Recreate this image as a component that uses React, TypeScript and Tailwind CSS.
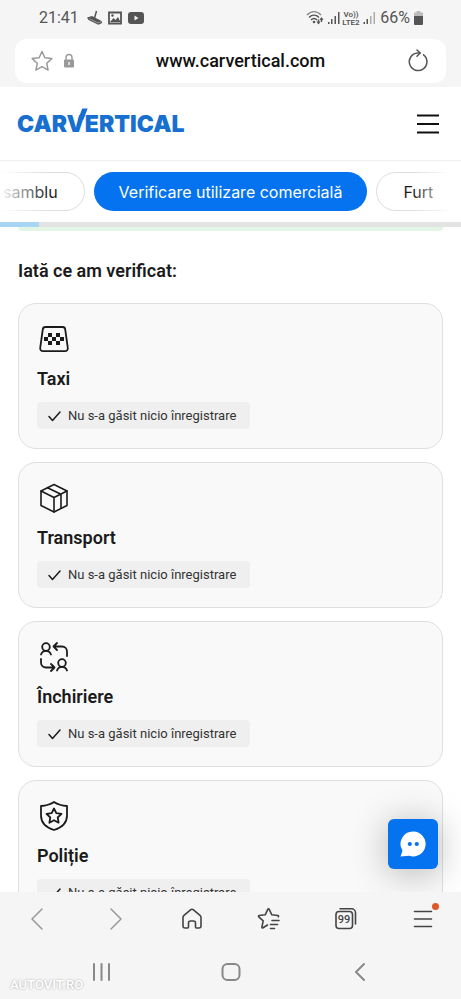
import React from 'react';

type IconProps = { className?: string };

const Stroke: React.FC<{ className?: string; box: string; width?: number; children: React.ReactNode }> = ({
  className,
  box,
  width = 1.6,
  children,
}) => (
  <svg
    className={className}
    viewBox={box}
    fill="none"
    stroke="currentColor"
    strokeWidth={width}
    strokeLinecap="round"
    strokeLinejoin="round"
    aria-hidden="true"
  >
    {children}
  </svg>
);

const TaxiIcon: React.FC<IconProps> = ({ className }) => (
  <Stroke className={className} box="0 0 34 34" width={1.8}>
    <path d="M8.400 5h17.200a2.600 2.600 0 0 1 2.600 2.300l2.600 18.600a2.800 2.800 0 0 1-2.800 3.300H6a2.800 2.800 0 0 1-2.800-3.300l2.600-18.600A2.600 2.600 0 0 1 8.400 5Z" />
    <g fill="currentColor" stroke="none">
      <path d="M11 11h4v4h-4zM19 11h4v4h-4zM7 15h4v4H7zM15 15h4v4h-4zM23 15h4v4h-4zM11 19h4v4h-4zM19 19h4v4h-4z" />
    </g>
  </Stroke>
);

const BoxIcon: React.FC<IconProps> = ({ className }) => (
  <Stroke className={className} box="0 0 34 34">
    <path d="M17 3.500 30 10v14.500L17 31 4 24.500V10Z" />
    <path d="M4 10l13 6.500L30 10M17 16.500V31M10.500 6.700l13.500 6.600v14" />
  </Stroke>
);

const RentIcon: React.FC<IconProps> = ({ className }) => (
  <Stroke className={className} box="0 0 34 34" width={1.8}>
    <circle cx="9" cy="7" r="3.800" />
    <path d="M4 14.500c.8-2.400 2.600-3.700 5-3.700s4.200 1.300 5 3.700" />
    <circle cx="25" cy="23" r="3.800" />
    <path d="M20 30.500c.8-2.400 2.600-3.700 5-3.700s4.200 1.300 5 3.700" />
    <path d="M20 3 16.500 6.500 20 10M16.500 6.500H25a5 5 0 0 1 5 5V16" />
    <path d="M14 24l3.500 3.500L14 31M17.500 27.500H9a5 5 0 0 1-5-5V19" />
  </Stroke>
);

const ShieldIcon: React.FC<IconProps> = ({ className }) => (
  <Stroke className={className} box="0 0 34 34" width={1.8}>
    <path d="M17 3c4 2.600 8 3.700 13 4v9.500c0 7-5 12-13 14.500C9 28.500 4 23.500 4 16.500V7c5-.3 9-1.400 13-4Z" />
    <path d="m17 9.500 2.300 4.700 5.200.7-3.800 3.600.9 5.200-4.600-2.500-4.600 2.500.9-5.200-3.800-3.600 5.200-.7Z" />
  </Stroke>
);

const checks = [
  { title: 'Taxi', Icon: TaxiIcon },
  { title: 'Transport', Icon: BoxIcon },
  { title: 'Închiriere', Icon: RentIcon },
  { title: 'Poliție', Icon: ShieldIcon },
];

const StatusBar: React.FC = () => (
  <div className="flex h-9 items-center justify-between pl-[39px] pr-[38px] text-[#555]">
    <div className="flex items-center gap-1">
      <span className="mr-1 text-base">21:41</span>
      <svg className="h-4 w-4" viewBox="0 0 16 16" fill="currentColor" aria-hidden="true">
        <path d="M0 7.500 5 6l9.500 5c.8.500.8 2-.2 2.500l-3 1.200L1.500 10Z" />
        <path d="M7.500 8 9.500 1" stroke="currentColor" strokeWidth="1.500" />
        <path d="m2.500 8.800 8.500 4.200 3.500-1.400" stroke="#bbb" strokeWidth=".7" fill="none" />
      </svg>
      <svg className="h-4 w-4" viewBox="0 0 16 16" aria-hidden="true">
        <path d="M2 2.500h12v11H2Z" fill="none" stroke="currentColor" strokeWidth="1.800" />
        <path d="m3 12 3.500-4 2 2L11 7l2.500 5Z" fill="currentColor" />
        <circle cx="5.500" cy="5.500" r="1.200" fill="currentColor" />
      </svg>
      <svg className="h-4 w-[18px]" viewBox="0 0 18 16" aria-hidden="true">
        <rect x="1" y="2" width="16" height="12" rx="3" fill="currentColor" />
        <path d="m7.500 5.500 4 2.500-4 2.500Z" fill="#f5f5f5" />
      </svg>
    </div>
    <div className="flex items-center gap-1">
      <svg className="h-4 w-[70px]" viewBox="0 0 70 16" aria-hidden="true">
        <g fill="none" stroke="currentColor" strokeWidth="1.400">
          <path d="M1 5c4-4.500 10-4.500 14 0" stroke="#888" />
          <path d="M3 7.500c3-3 7-3 10 0M5 10c2-2 4-2 6 0" />
          <path d="M12.500 9.500v4M15.500 8v4" />
        </g>
        <g fill="currentColor">
          <circle cx="8" cy="12" r="1.300" />
          <path d="m10.500 11.500 2 3 2-3ZM13.500 10l2-3 2 3Z" />
          <path d="M22 12h1.500v2H22ZM25 9h1.500v5H25ZM28.500 6H30v8h-1.500ZM32 2h1.500v12H32Z" />
          <path d="M57.500 12H59v2h-1.500ZM60.500 9H62v5h-1.500Z" />
          <path d="M64 6h1.500v8H64ZM67.500 2H69v12h-1.500Z" opacity=".45" />
        </g>
        <text x="45" y="7" fontSize="8" fontWeight="600" fill="currentColor" textAnchor="middle">Vo))</text>
        <text x="45" y="15" fontSize="8" fontWeight="600" fill="currentColor" textAnchor="middle">LTE2</text>
      </svg>
      <span className="text-base">66%</span>
      <svg className="h-[14px] w-[9px]" viewBox="0 0 9 14" aria-hidden="true">
        <path d="M2.500 0h4v1.500H9V6H0V1.500h2.500Z" fill="#bbb" />
        <path d="M0 5h9v8a1 1 0 0 1-1 1H1a1 1 0 0 1-1-1Z" fill="currentColor" />
      </svg>
    </div>
  </div>
);

const AddressBar: React.FC = () => (
  <div className="mx-[15px] mt-[3px] flex h-11 items-center rounded-xl bg-white px-4">
    <button aria-label="Favorite" className="text-[#999]">
      <Stroke className="h-[22px] w-[22px]" box="0 0 22 22" width={1.5}>
        <path d="m11 1.500 2.900 6.300 6.900.8-5.100 4.700 1.400 6.800L11 16.700l-6.100 3.400 1.400-6.800L1.200 8.600l6.900-.8Z" />
      </Stroke>
    </button>
    <svg className="ml-2.5 h-4 w-3 text-[#999]" viewBox="0 0 12 16" aria-hidden="true">
      <path d="M3 7V4.500a3 3 0 0 1 6 0V7" fill="none" stroke="currentColor" strokeWidth="1.400" />
      <rect x="1" y="6.500" width="10" height="8" rx="1" fill="currentColor" />
      <path d="M6 9v3" stroke="#fff" strokeWidth="1.300" />
    </svg>
    <input
      aria-label="Adresă"
      defaultValue="www.carvertical.com"
      className="min-w-0 flex-1 bg-transparent text-center text-lg font-medium text-[#111] outline-none"
    />
    <button aria-label="Reîncarcă" className="text-[#555]">
      <Stroke className="h-6 w-6" box="0 0 24 24" width={1.5}>
        <path d="M17.500 5.800A8.800 8.800 0 1 1 11.500 4H14" />
        <path d="m11 1 3.200 3-3.200 3.200" />
      </Stroke>
    </button>
  </div>
);

const SiteHeader: React.FC = () => (
  <header className="flex h-[74px] shrink-0 items-center justify-between border-b border-[#eee] pl-[17px] pr-[22px]">
    <a href="#" className="font-[Inter,sans-serif] text-[23px] font-black leading-7 text-[#176fd0]">
      CAR
      <span className="relative">
        V
        {/* raised right arm of the V */}
        <svg className="absolute -top-0.5 left-0 h-3 w-[22px]" viewBox="0 0 22 12" fill="currentColor" aria-hidden="true">
          <path d="M15.200.6h5.400L16.500 11.600H11Z" />
        </svg>
      </span>
      ERTICAL
    </a>
    <button aria-label="Meniu" className="text-[#111]">
      <svg className="h-6 w-[22px]" viewBox="0 0 22 24" aria-hidden="true">
        <path d="M0 3.500h22M0 12h22M0 20.500h22" stroke="currentColor" strokeWidth="2" />
      </svg>
    </button>
  </header>
);

const Tabs: React.FC = () => (
  <nav className="relative shrink-0 font-[Inter,sans-serif] text-base text-[#1c1c1c]">
    <div className="flex h-[61px] items-center justify-center gap-[9px] overflow-hidden">
      <button className="flex h-[39px] w-28 shrink-0 items-center justify-end rounded-full border border-[#ddd] px-[26px]">
        samblu
      </button>
      <button className="h-[39px] shrink-0 rounded-full bg-[#0573f0] px-[25px] text-white">
        Verificare utilizare comercială
      </button>
      <button className="flex h-[39px] w-28 shrink-0 items-center rounded-full border border-[#ddd] px-[26px]">
        Furt
      </button>
    </div>
    <div className="pointer-events-none absolute inset-y-0 left-0 w-12 bg-linear-to-r from-white to-transparent" />
    <div className="pointer-events-none absolute inset-y-0 right-0 w-12 bg-linear-to-l from-white from-20% to-transparent" />
    <div className="relative h-[5px] bg-[#e2e3e2]">
      <div className="h-full w-[39px] bg-[#a9d5f5]" />
    </div>
  </nav>
);

const CheckCard: React.FC<(typeof checks)[number]> = ({ title, Icon }) => (
  <li className="flex h-[146px] shrink-0 flex-col items-start rounded-[18px] border border-[#dfdfdf] bg-[#f9f9f9] px-[18px] pt-[18px] text-[#1b1b1b]">
    <Icon className="h-[34px] w-[34px]" />
    <h3 className="mt-[11px] text-lg font-semibold leading-6">{title}</h3>
    <p className="mt-[11px] flex h-[27px] items-center gap-1.5 rounded bg-[#efefef] pl-2.5 pr-3.5 text-[13px] text-[#333]">
      <Stroke className="h-[14px] w-[15px] text-[#1b1b1b]" box="0 0 15 14" width={1.5}>
        <path d="m2 7.500 3.500 4L13 3" />
      </Stroke>
      Nu s-a găsit nicio înregistrare
    </p>
  </li>
);

const Toolbar: React.FC = () => (
  <div className="flex h-[53px] items-center justify-between px-[26px] text-[#444]">
    <button aria-label="Înapoi" className="text-[#999]">
      <Stroke className="h-6 w-6" box="0 0 24 24" width={1.5}>
        <path d="M16 2 6 12l10 10" />
      </Stroke>
    </button>
    <button aria-label="Înainte" className="text-[#999]">
      <Stroke className="h-6 w-6" box="0 0 24 24" width={1.5}>
        <path d="m8 2 10 10L8 22" />
      </Stroke>
    </button>
    <button aria-label="Acasă">
      <Stroke className="h-6 w-6" box="0 0 24 24">
        <path d="M3 10.500c0-1 .3-1.600 1-2.200l6.500-5.400a2.300 2.300 0 0 1 3 0L20 8.300c.7.600 1 1.200 1 2.200V19a2 2 0 0 1-2 2h-2.500a1 1 0 0 1-1-1v-4a2 2 0 0 0-2-2h-3a2 2 0 0 0-2 2v4a1 1 0 0 1-1 1H5a2 2 0 0 1-2-2Z" />
      </Stroke>
    </button>
    <button aria-label="Marcaje">
      <Stroke className="h-6 w-6" box="0 0 24 24">
        <path d="M10.500 18 6 20.800c-.7.400-1.200 0-1.100-.7l1.300-6.300-4.400-4c-.6-.5-.3-1.200.4-1.300l6-.7 2.700-5.600c.3-.6.900-.6 1.200 0l2.700 5.600 6 .7c.8.1 1 .8.500 1.300" />
        <path d="M15 13.500h7M13.500 17.500h7M13.500 21.500h4" />
      </Stroke>
    </button>
    <button aria-label="File deschise" className="relative h-6 w-6">
      <Stroke className="h-6 w-6" box="0 0 24 24">
        <rect x="2" y="4.500" width="16.500" height="17" rx="3" />
        <path d="M6 1.800h11.500a4 4 0 0 1 4 4V17" />
      </Stroke>
      <span className="absolute left-0.5 top-[5px] w-4 text-center text-[11px] font-medium leading-4">99</span>
    </button>
    <button aria-label="Mai multe" className="relative">
      <Stroke className="h-6 w-6" box="0 0 24 24">
        <path d="M3.500 4.500h17M3.500 12h17M3.500 19.500h17" />
      </Stroke>
      <span className="absolute -right-1 -top-1 h-[7px] w-[7px] rounded-full bg-[#dd5a28]" />
    </button>
  </div>
);

const SystemNav: React.FC = () => (
  <div className="relative flex h-[54px] items-center justify-between px-[89px] text-[#888]">
    <button aria-label="Recente">
      <Stroke className="h-6 w-6" box="0 0 24 24" width={2}>
        <path d="M5 4v16M12.500 4v16M20 4v16" />
      </Stroke>
    </button>
    <button aria-label="Ecran principal">
      <Stroke className="h-6 w-6" box="0 0 24 24" width={2}>
        <rect x="3.500" y="4" width="17" height="16" rx="5" />
      </Stroke>
    </button>
    <button aria-label="Înapoi la ecranul anterior">
      <Stroke className="h-6 w-6" box="0 0 24 24" width={2}>
        <path d="m16 4-8 8 8 8" />
      </Stroke>
    </button>
    <span className="absolute bottom-1.5 left-2.5 text-[13px] font-semibold leading-4 text-white [text-shadow:0_0_2px_#999]">
      AUTOVIT.RO
    </span>
  </div>
);

const App: React.FC = () => {
  return (
    <div className="flex h-screen w-full flex-col overflow-hidden bg-white font-[Roboto,sans-serif]">
      <div className="shrink-0 bg-[#f5f5f5] pb-1">
        <StatusBar />
        <AddressBar />
      </div>

      <SiteHeader />
      <Tabs />

      <main className="relative min-h-0 flex-1 overflow-hidden px-[18px]">
        <div className="h-1 rounded-b-2xl bg-[#e3f6e6]" />
        <h2 className="mt-7 text-lg font-semibold leading-6 text-[#1b1b1b]">Iată ce am verificat:</h2>
        <ul className="mt-5 flex flex-col gap-[13px]">
          {checks.map((check) => (
            <CheckCard key={check.title} {...check} />
          ))}
        </ul>
        {/* Chat */}
        <button
          aria-label="Chat"
          className="absolute bottom-[23px] right-[23px] flex h-[50px] w-[50px] items-center justify-center rounded-md bg-[#0573f0] shadow-[0_4px_36px_rgba(0,0,0,0.28)]"
        >
          <svg className="h-7 w-7" viewBox="0 0 28 28" aria-hidden="true">
            <path d="M14.500 1.500a12.500 12.500 0 1 1-4.500 24.300l-8.500.7 2-5.800A12.500 12.500 0 0 1 14.500 1.500Z" fill="#fff" />
            <circle cx="10.800" cy="14" r="2.100" fill="#0573f0" />
            <circle cx="17.800" cy="14" r="2.100" fill="#0573f0" />
          </svg>
        </button>
      </main>

      <footer className="shrink-0 bg-[#f5f5f5]">
        <Toolbar />
        <SystemNav />
      </footer>
    </div>
  );
};

export default App;
